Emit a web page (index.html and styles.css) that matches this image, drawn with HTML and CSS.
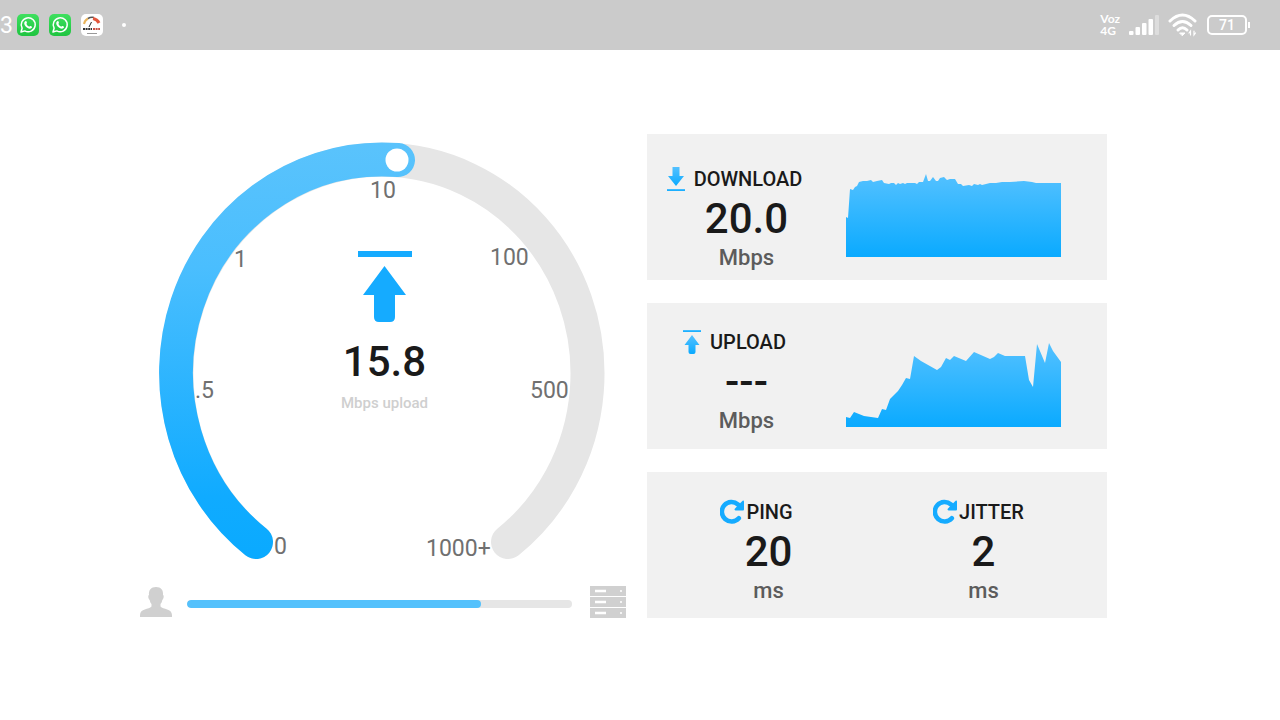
FILE: index.html
```html
<!DOCTYPE html>
<html lang="en">

<head>
    <meta charset="UTF-8">
    <meta name="viewport" content="width=device-width, initial-scale=1.0">
    <title>Speed Test</title>
    <link rel="stylesheet" href="styles.css">
</head>

<body>
    <!-- Shared icons -->
    <svg class="defs" width="0" height="0" aria-hidden="true">
        <defs>
            <linearGradient id="blue" x1="0" y1="0" x2="0" y2="1">
                <stop offset="0" stop-color="#54c1ff" />
                <stop offset="1" stop-color="#0aaaff" />
            </linearGradient>
            <linearGradient id="green" x1="0" y1="0" x2="0" y2="1">
                <stop offset="0" stop-color="#3fe05f" />
                <stop offset="1" stop-color="#1fc440" />
            </linearGradient>
            <symbol id="whatsapp" viewBox="0 0 22 22">
                <rect width="22" height="22" rx="5" fill="url(#green)" />
                <path d="M4 18 L5.100 14.200 A7 7 0 1 1 7.800 16.900 Z" fill="none" stroke="#fff" stroke-width="1.500" stroke-linejoin="round" />
                <path d="M8.300 7.200 C9 6.600 9.500 7 9.900 8.400 C10.100 9 9.300 9.400 9.500 9.900 C10.200 11.300 11 12 12.200 12.600 C12.800 12.800 13.100 11.700 13.700 11.900 C15.200 12.600 15.300 12.800 14.900 13.600 C14 15.200 12 14.800 10.300 13.700 C8.300 12.400 7.100 10.600 7.200 9 C7.300 8.200 7.700 7.600 8.300 7.200 Z" fill="#fff" />
            </symbol>
            <symbol id="reload" viewBox="0 0 24 26">
                <path d="M18.800 19.200 A9.700 9.700 0 1 1 18 5.500" fill="none" stroke="#15abff" stroke-width="4.600" stroke-linecap="round" />
                <path d="M22.600 1.700 Q24 1 24 2.600 V10.500 Q24 11.500 23 11.500 H15.500 Q13.800 11 15 9.500 Z" fill="#15abff" />
            </symbol>
        </defs>
    </svg>

    <header class="status-bar">
        <div class="notifications">
            <span class="clock">3</span>
            <svg class="app-icon"><use href="#whatsapp" /></svg>
            <svg class="app-icon"><use href="#whatsapp" /></svg>
            <svg class="app-icon" viewBox="0 0 22 22">
                <rect width="22" height="22" rx="5" fill="#fff" />
                <path d="M3 10 A8 8 0 0 1 7 4.500" fill="none" stroke="#e9b45c" stroke-width="2" />
                <path d="M7 4.500 A8 8 0 0 1 13 3.500" fill="none" stroke="#555" stroke-width="1.500" />
                <path d="M12 4.500 A8 8 0 0 1 18 9" fill="none" stroke="#e2573d" stroke-width="3" />
                <path d="M8 13 L10.500 8" stroke="#222" stroke-width="1" />
                <path d="M2 15 H11" stroke="#333" stroke-width="2" stroke-dasharray="2 .6" />
                <path d="M12 15 H19" stroke="#c85348" stroke-width="2" stroke-dasharray="2 .6" />
                <path d="M6 19.500 H16" stroke="#999" stroke-width="1" />
            </svg>
            <span class="dot"></span>
        </div>
        <div class="system">
            <div class="network">
                <span>Voz</span>
                <span>4G</span>
            </div>
            <svg width="30" height="22" viewBox="0 0 30 22" fill="#fff">
                <rect x="0" y="17" width="4.500" height="4" rx="1" />
                <rect x="6.500" y="13" width="4.500" height="8" rx="1" />
                <rect x="13" y="9" width="4.500" height="12" rx="1" />
                <rect x="19.500" y="5" width="4.500" height="16" rx="1" />
                <rect x="26" y="1" width="4" height="20" rx="1" opacity=".35" />
            </svg>
            <svg width="30" height="24" viewBox="0 0 30 24" fill="none" stroke="#fff" stroke-width="3" stroke-linecap="round">
                <path d="M2 8 Q14.500 -4 27 8" />
                <path d="M6 12.500 Q14.500 4.500 23 12.500" />
                <path d="M10 17 Q14.500 12.500 19 17" />
                <path d="M12 20 H17 L14.500 22.500 Z" fill="#fff" stroke-width="1" />
                <path d="M22.500 22 V18 L21 20 M26 18 V22 L27.500 20" stroke-width="1.200" />
            </svg>
            <span class="battery">71</span>
        </div>
    </header>

    <main class="page">
        <section class="meter">
            <div class="gauge">
                <svg class="dial" viewBox="0 0 488 440">
                    <defs>
                        <linearGradient id="arc" gradientUnits="userSpaceOnUse" x1="0" y1="9" x2="0" y2="425">
                            <stop offset="0" stop-color="#5ac3fc" />
                            <stop offset=".3" stop-color="#4abefe" />
                            <stop offset=".85" stop-color="#10abff" />
                            <stop offset="1" stop-color="#0aaaff" />
                        </linearGradient>
                    </defs>
                    <path class="track" d="M118 408 A205.500 213.500 0 1 1 370 408" />
                    <path class="level" d="M118 408 A205.500 213.500 0 0 1 244 25.500 Q252 25.500 260 26" />
                    <circle cx="259" cy="26" r="11.500" fill="#fff" />
                    <g class="ticks">
                        <text x="136" y="420">0</text>
                        <text x="57" y="264">.5</text>
                        <text x="96" y="133">1</text>
                        <text x="232" y="64">10</text>
                        <text x="352" y="131">100</text>
                        <text x="392" y="264">500</text>
                        <text x="288" y="422">1000+</text>
                    </g>
                </svg>
                <div class="reading">
                    <svg width="54" height="72" viewBox="0 0 54 72" fill="#15abff">
                        <path d="M0 0 H54 V6 H0 Z" />
                        <path d="M26.500 15 L48 44 H37 V66 Q37 71 32 71 H21 Q16 71 16 66 V44 H5 Z" />
                    </svg>
                    <p class="value">15.8</p>
                    <p class="caption">Mbps upload</p>
                </div>
            </div>

            <div class="transfer">
                <svg width="34" height="32" viewBox="-2 0 34 32" fill="#d0d0d0">
                    <path d="M16 1 C21 1 23.500 4 23 9 C24.200 9 23.800 13 22.300 14 C22 16 21.300 17 20.500 18 V20.500 C23 23.500 32 22.500 32 29 V31 H0 V29 C0 22.500 9 23.500 11.500 20.500 V18 C10.700 17 10 16 9.700 14 C8.200 13 7.800 9 9 9 C8.500 4 11 1 16 1 Z" />
                </svg>
                <progress value="294" max="385" aria-label="Test progress"></progress>
                <svg width="36" height="32" viewBox="0 0 36 32">
                    <path d="M0 0 H36 V10 H0 Z M0 11 H36 V21 H0 Z M0 22 H36 V32 H0 Z" fill="#d0d0d0" />
                    <path d="M5 5 H16 M5 16 H16 M5 27 H16" stroke="#fff" stroke-width="2.500" />
                    <path d="M30 5 H32 M30 16 H32 M30 27 H32" stroke="#f4f4f4" stroke-width="2" />
                </svg>
            </div>
        </section>

        <section class="results">
            <article class="card download">
                <div class="stat">
                    <h2>
                        <svg width="18" height="24" viewBox="0 0 18 24" fill="url(#blue)">
                            <path d="M5.500 0 H12.500 V9 H17 L9 19 L1 9 H5.500 Z" />
                            <path d="M0 22 H18 V24 H0 Z" />
                        </svg>
                        DOWNLOAD
                    </h2>
                    <p class="value">20.0</p>
                    <p class="unit">Mbps</p>
                </div>
                <svg class="chart" viewBox="0 0 215 84" preserveAspectRatio="none">
                    <path fill="url(#blue)" d="M0 84 V44 L2 45 L4 16 L7 17 L9 14 L11 13 L13 9 L17 8 L21 8 L25 7 L27 9 L31 8 L36 7 L38 10 L43 11 L45 10 L48 10 L50 12 L52 10 L54 11 L57 10 L59 11 L61 10 L69 10 L71 11 L73 9 L77 9 L80 1 L82 8 L84 8 L87 4 L90 8 L92 8 L94 5 L98 4 L101 7 L104 6 L109 6 L112 11 L115 11 L117 13 L123 12 L126 13 L128 11 L132 12 L134 11 L136 12 L144 10 L150 10 L156 9 L164 9 L178 8 L186 9 L190 10 L215 10 V84 Z" />
                </svg>
            </article>

            <article class="card">
                <div class="stat">
                    <h2>
                        <svg width="18" height="24" viewBox="0 0 18 24" fill="url(#blue)">
                            <path d="M0 0 H18 V2 H0 Z" />
                            <path d="M9 5 L16.500 15 H12.500 V22 Q12.500 24 10.500 24 H7.500 Q5.500 24 5.500 22 V15 H1.500 Z" />
                        </svg>
                        UPLOAD
                    </h2>
                    <p class="value">---</p>
                    <p class="unit">Mbps</p>
                </div>
                <svg class="chart" viewBox="0 0 215 84" preserveAspectRatio="none">
                    <path fill="url(#blue)" d="M0 84 V74 L4 75 L8 69 L18 73 L32 75 L36 66 L40 67 L44 56 L52 48 L56 42 L60 35 L64 36 L68 13 L75 18 L91 27 L95 24 L100 15 L104 17 L108 13 L120 18 L128 9 L144 16 L148 14 L152 10 L159 13 H179 L183 37 L187 44 L191 1 L199 20 L203 0 L207 8 L215 19 V84 Z" />
                </svg>
            </article>

            <article class="card latency">
                <div class="stat">
                    <h2><svg width="24" height="26"><use href="#reload" /></svg>PING</h2>
                    <p class="value">20</p>
                    <p class="unit">ms</p>
                </div>
                <div class="stat jitter">
                    <h2><svg width="24" height="26"><use href="#reload" /></svg>JITTER</h2>
                    <p class="value">2</p>
                    <p class="unit">ms</p>
                </div>
            </article>
        </section>
    </main>
</body>

</html>
```
FILE: styles.css
```css
* {
    margin: 0;
    padding: 0;
    box-sizing: border-box;
}

body {
    font-family: Roboto, "Liberation Sans", sans-serif;
    background-color: #fff;
    color: #1a1a1a;
}

svg {
    display: block;
    flex-shrink: 0;
}

.defs {
    position: absolute;
}

/* Status bar */
.status-bar {
    display: flex;
    justify-content: space-between;
    align-items: center;
    height: 50px;
    padding-right: 30px;
    background-color: #cbcbcb;
    color: #fff;
}

.notifications {
    display: flex;
    align-items: center;
    gap: 10px;
}

.clock {
    width: 7px;
    font-size: 23px;
}

.app-icon {
    width: 22px;
    height: 22px;
}

.dot {
    width: 4px;
    height: 4px;
    margin-left: 9px;
    border-radius: 50%;
    background-color: #fff;
}

.system {
    display: flex;
    align-items: center;
    gap: 9px;
}

.network {
    display: grid;
    font-family: Lato, sans-serif;
    font-size: 12px;
    font-weight: bold;
    line-height: 12px;
}

.battery {
    position: relative;
    width: 40px;
    height: 20px;
    margin-right: 3px;
    border: 2px solid #fff;
    border-radius: 5px;
    font-size: 14px;
    font-weight: 500;
    line-height: 16px;
    text-align: center;
}

.battery::after {
    content: "";
    position: absolute;
    top: 5px;
    right: -5px;
    width: 2px;
    height: 6px;
    background-color: #fff;
}

/* Main layout */
.page {
    display: grid;
    grid-template-columns: 488fr 460fr;
    gap: 21px;
    align-items: start;
    padding: 84px 173px 40px 138px;
}

/* Gauge */
.gauge {
    display: grid;
}

.dial,
.reading {
    grid-area: 1 / 1;
}

.dial {
    width: 100%;
}

.track,
.level {
    fill: none;
    stroke-width: 34px;
    stroke-linecap: round;
}

.track {
    stroke: #e6e6e6;
}

.level {
    stroke: url(#arc);
}

.ticks {
    fill: #707070;
    font-size: 23px;
}

.reading {
    display: flex;
    flex-direction: column;
    align-items: center;
    padding: 117px 0 0 5px;
}

.value {
    font-size: 42px;
    font-weight: 500;
    line-height: 50px;
}

.reading .value {
    margin-top: 14px;
}

.caption {
    margin-top: 4px;
    color: #cfcfcf;
    font-size: 15px;
    font-weight: 500;
    line-height: 24px;
}

/* Transfer progress */
.transfer {
    display: flex;
    align-items: center;
    margin-top: 12px;
}

progress {
    appearance: none;
    flex: 1;
    min-width: 0;
    height: 8px;
    margin: 4px 18px 0 15px;
    border: none;
    border-radius: 4px;
    background-color: #e6e6e6;
    overflow: hidden;
}

progress::-webkit-progress-bar {
    background-color: #e6e6e6;
}

progress::-webkit-progress-value {
    border-radius: 4px;
    background-color: #54c1fc;
}

progress::-moz-progress-bar {
    border-radius: 4px;
    background-color: #54c1fc;
}

/* Result cards */
.results {
    display: grid;
    gap: 23px;
}

.card {
    display: grid;
    grid-template-columns: 199fr 215fr 46fr;
    align-items: start;
    min-height: 146px;
    padding-top: 24px;
    background-color: #f1f1f1;
}

.card.download {
    padding-top: 30px;
}

.card.latency {
    grid-template-columns: 1fr 1fr;
    padding-top: 25px;
    padding-right: 16px;
    padding-left: 14px;
}

.stat {
    text-align: center;
}

h2 {
    display: flex;
    justify-content: center;
    align-items: center;
    gap: 9px;
    height: 30px;
    padding-right: 24px;
    font-size: 20px;
    font-weight: 500;
}

.latency h2 {
    gap: 2px;
}

.jitter h2 {
    padding-right: 10px;
}

.unit {
    color: #5c5c5c;
    font-size: 22px;
    font-weight: 500;
    line-height: 28px;
}

.chart {
    width: 100%;
    height: 84px;
    margin-top: 16px;
}

.download .chart {
    margin-top: 9px;
}
```
